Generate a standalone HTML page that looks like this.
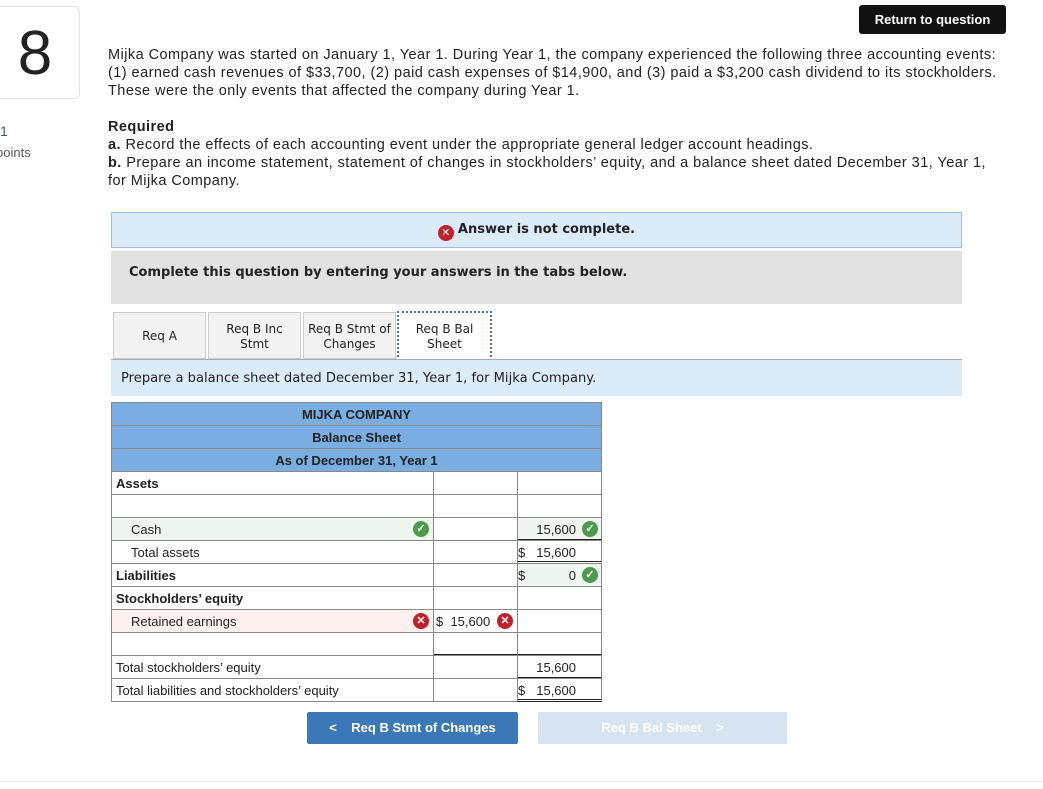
<!DOCTYPE html>
<html><head><meta charset="utf-8"><style>
*{box-sizing:border-box;margin:0;padding:0}
body{width:1043px;height:789px;background:#fff;font-family:"Liberation Sans",Arial,sans-serif;color:#222;position:relative;overflow:hidden}
.a{position:absolute}
.v{font-family:"DejaVu Sans",Verdana,sans-serif}
.p{font-size:14.5px;line-height:18px;color:#222;letter-spacing:0.45px}
.cell{position:absolute;border:1px solid #888;font-size:13px;line-height:23px;padding-left:4px}
.hd{background:#7aade2;text-align:center;font-weight:bold;padding:0}
.ok,.bad{display:inline-block;width:16px;height:16px;border-radius:50%;position:absolute;color:#fff;font-size:11px;line-height:16px;text-align:center;font-weight:bold}
.ok{background:#4d9a4d}.bad{background:#c0202a}
</style></head><body>
<div class="a" style="left:-10px;top:6px;width:90px;height:93px;border:1px solid #e3e3e3;border-radius:6px;font-size:62px;line-height:93px;text-align:center;color:#222">8</div>
<div class="a" style="left:0;top:123px;font-size:14px;color:#2a5da8">1</div>
<div class="a" style="left:-4px;top:145px;font-size:13px;color:#555">points</div>
<div class="a" style="left:859px;top:5px;width:147px;height:29px;background:#111;border-radius:3px;color:#fff;font-weight:bold;font-size:13px;line-height:29px;text-align:center">Return to question</div>
<div class="a p" style="left:108px;top:46px;width:896px">Mijka Company was started on January 1, Year 1. During Year 1, the company experienced the following three accounting events: (1) earned cash revenues of $33,700, (2) paid cash expenses of $14,900, and (3) paid a $3,200 cash dividend to its stockholders. These were the only events that affected the company during Year 1.</div>
<div class="a p" style="left:108px;top:118px;width:896px"><b>Required</b><br><b>a.</b> Record the effects of each accounting event under the appropriate general ledger account headings.<br><b>b.</b> Prepare an income statement, statement of changes in stockholders’ equity, and a balance sheet dated December 31, Year 1,<br>for Mijka Company.</div>
<div class="a v" style="left:111px;top:212px;width:851px;height:36px;background:#dcebf8;border:1px solid #9dbde0;text-align:center;font-weight:bold;font-size:13px;line-height:34px"><span class="bad" style="position:relative;display:inline-block;vertical-align:-3px;margin-right:4px">✕</span>Answer is not complete.</div>
<div class="a v" style="left:111px;top:251px;width:851px;height:53px;background:#e2e2e2;font-weight:bold;font-size:13px;line-height:44px;padding-left:18px">Complete this question by entering your answers in the tabs below.</div>
<div class="a v" style="left:113px;top:312px;width:93px;height:47px;border:1px solid #ccc;background:#f2f2f2;font-size:12px;text-align:center;line-height:47px">Req A</div>
<div class="a v" style="left:208px;top:312px;width:93px;height:47px;border:1px solid #ccc;background:#f2f2f2;font-size:12px;text-align:center;line-height:15px;padding-top:9px">Req B Inc<br>Stmt</div>
<div class="a v" style="left:303px;top:312px;width:93px;height:47px;border:1px solid #ccc;background:#f2f2f2;font-size:12px;text-align:center;line-height:15px;padding-top:9px">Req B Stmt of<br>Changes</div>
<div class="a v" style="left:397px;top:311px;width:95px;height:50px;border:2px dotted #3a7bc8;background:#fff;font-size:12px;text-align:center;line-height:15px;padding-top:9px">Req B Bal<br>Sheet</div>
<div class="a v" style="left:111px;top:359px;width:851px;height:37px;background:#dcebf8;border-top:1px solid #aaa;font-size:13.1px;line-height:38px;padding-left:10px">Prepare a balance sheet dated December 31, Year 1, for Mijka Company.</div>

<div class="cell hd" style="left:111px;top:402px;width:491px;height:24px">MIJKA COMPANY</div>
<div class="cell hd" style="left:111px;top:425px;width:491px;height:24px">Balance Sheet</div>
<div class="cell hd" style="left:111px;top:448px;width:491px;height:24px">As of December 31, Year 1</div>

<div class="cell" style="left:111px;top:471px;width:323px;height:24px;font-weight:bold">Assets</div>
<div class="cell" style="left:433px;top:471px;width:85px;height:24px"></div>
<div class="cell" style="left:517px;top:471px;width:85px;height:24px"></div>

<div class="cell" style="left:111px;top:494px;width:323px;height:24px"></div>
<div class="cell" style="left:433px;top:494px;width:85px;height:24px"></div>
<div class="cell" style="left:517px;top:494px;width:85px;height:24px"></div>

<div class="cell" style="left:111px;top:517px;width:323px;height:24px;background:#eef5ee;padding-left:19px">Cash<span class="ok" style="left:301px;top:3px">✓</span></div>
<div class="cell" style="left:433px;top:517px;width:85px;height:24px"></div>
<div class="cell" style="left:517px;top:517px;width:85px;height:24px;background:#eef5ee;border-bottom:2px solid #222"><span style="position:absolute;right:25px">15,600</span><span class="ok" style="left:64px;top:3px">✓</span></div>

<div class="cell" style="left:111px;top:540px;width:323px;height:24px;padding-left:19px">Total assets</div>
<div class="cell" style="left:433px;top:540px;width:85px;height:24px"></div>
<div class="cell" style="left:517px;top:540px;width:85px;height:24px;border-bottom:3px double #222;padding-left:0">$<span style="position:absolute;right:25px">15,600</span></div>

<div class="cell" style="left:111px;top:563px;width:323px;height:24px;font-weight:bold">Liabilities</div>
<div class="cell" style="left:433px;top:563px;width:85px;height:24px"></div>
<div class="cell" style="left:517px;top:563px;width:85px;height:24px;background:#eef5ee;padding-left:0">$<span style="position:absolute;right:25px">0</span><span class="ok" style="left:64px;top:3px">✓</span></div>

<div class="cell" style="left:111px;top:586px;width:323px;height:24px;font-weight:bold">Stockholders’ equity</div>
<div class="cell" style="left:433px;top:586px;width:85px;height:24px"></div>
<div class="cell" style="left:517px;top:586px;width:85px;height:24px"></div>

<div class="cell" style="left:111px;top:609px;width:323px;height:24px;background:#fdf0ef;padding-left:19px">Retained earnings<span class="bad" style="left:301px;top:3px">✕</span></div>
<div class="cell" style="left:433px;top:609px;width:85px;height:24px;padding-left:2px">$ &nbsp;15,600<span class="bad" style="left:63px;top:3px">✕</span></div>
<div class="cell" style="left:517px;top:609px;width:85px;height:24px"></div>

<div class="cell" style="left:111px;top:632px;width:323px;height:24px"></div>
<div class="cell" style="left:433px;top:632px;width:85px;height:24px;border-bottom:2px solid #222"></div>
<div class="cell" style="left:517px;top:632px;width:85px;height:24px;border-bottom:2px solid #222"></div>

<div class="cell" style="left:111px;top:655px;width:323px;height:24px">Total stockholders’ equity</div>
<div class="cell" style="left:433px;top:655px;width:85px;height:24px"></div>
<div class="cell" style="left:517px;top:655px;width:85px;height:24px;border-bottom:2px solid #222"><span style="position:absolute;right:25px">15,600</span></div>

<div class="cell" style="left:111px;top:678px;width:323px;height:24px">Total liabilities and stockholders’ equity</div>
<div class="cell" style="left:433px;top:678px;width:85px;height:24px"></div>
<div class="cell" style="left:517px;top:678px;width:85px;height:24px;border-bottom:3px double #222;padding-left:0">$<span style="position:absolute;right:25px">15,600</span></div>

<div class="a" style="left:307px;top:712px;width:211px;height:32px;background:#3b78b8;border-radius:2px;color:#fff;font-weight:bold;font-size:13px;line-height:32px;text-align:center">&lt;&nbsp;&nbsp;&nbsp; Req B Stmt of Changes</div>
<div class="a" style="left:538px;top:712px;width:249px;height:32px;background:#d6e3f1;border-radius:2px;color:#fff;font-weight:bold;font-size:13px;line-height:32px;text-align:center">Req B Bal Sheet &nbsp;&nbsp; &gt;</div>
<div class="a" style="left:0;top:781px;width:1043px;height:1px;background:#eee"></div>
</body></html>
